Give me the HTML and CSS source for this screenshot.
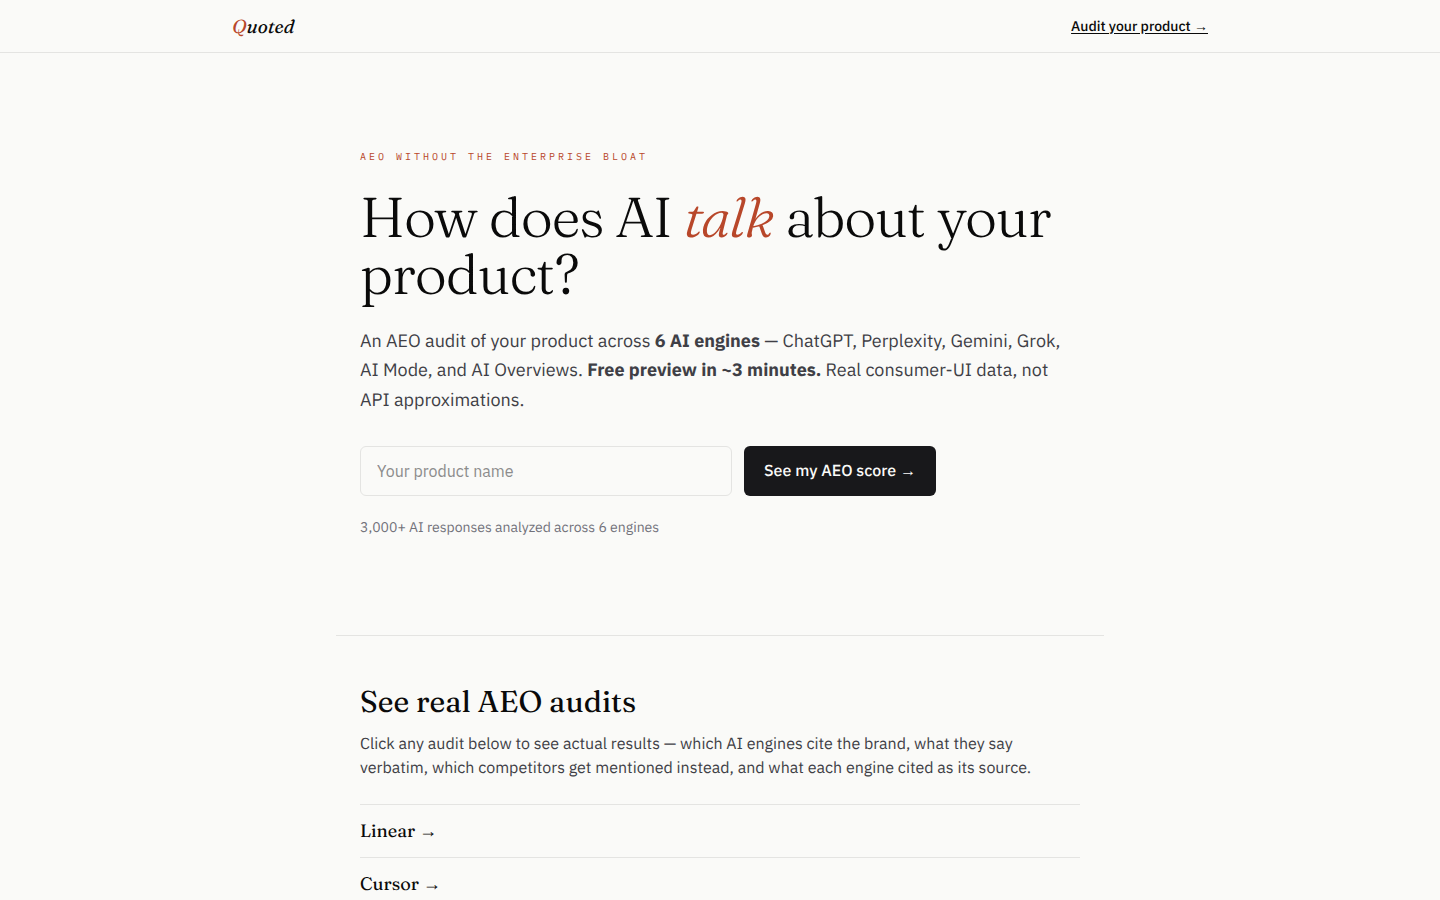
FILE: index.html
```html
<!DOCTYPE html>
<html lang="en">
<head>
<meta charset="utf-8">
<meta name="viewport" content="width=device-width, initial-scale=1">
<title>Quoted</title>
<link rel="stylesheet" href="styles.css">
</head>
<body>
<header class="site-header">
  <div class="site-nav">
    <a class="brand" href="/"><span class="accent">Q</span>uoted</a>
    <a class="nav-link" href="#audit">Audit your product <span class="arrow">→</span></a>
  </div>
</header>
<main class="content">
  <section class="hero" id="audit">
    <p class="eyebrow">AEO without the enterprise bloat</p>
    <h1 class="hero-title">How does AI <em class="accent">talk</em> about your product?</h1>
    <p class="lead">An AEO audit of your product across <strong>6 AI engines</strong> — ChatGPT, Perplexity, Gemini, Grok, AI Mode, and AI Overviews. <strong>Free preview in ~3 minutes.</strong> Real consumer-UI data, not API approximations.</p>
    <form class="audit-form">
      <input class="audit-input" type="text" name="product" placeholder="Your product name" aria-label="Your product name">
      <button class="audit-button" type="submit">See my AEO score <span class="arrow">→</span></button>
    </form>
    <p class="note">3,000+ AI responses analyzed across 6 engines</p>
  </section>
  <section class="audits">
    <h2 class="audits-title">See real AEO audits</h2>
    <p class="audits-text">Click any audit below to see actual results — which AI engines cite the brand, what they say verbatim, which competitors get mentioned instead, and what each engine cited as its source.</p>
    <ul class="audit-list">
      <li class="audit-item"><a class="audit-link" href="#linear">Linear →</a></li>
      <li class="audit-item"><a class="audit-link" href="#cursor">Cursor →</a></li>
    </ul>
  </section>
</main>
</body>
</html>
```

FILE: styles.css
```css
* {
  box-sizing: border-box;
}

:root {
  --ink: #0a0a0a;
  --text: #3f3f46;
  --muted: #71717a;
  --line: #e4e4e2;
  --paper: #fafaf8;
  --accent: #b8472a;
  --sans: "IBM Plex Sans", Roboto, sans-serif;
  --serif: Fraunces, "Liberation Serif", serif;
  --mono: "IBM Plex Mono", "Liberation Mono", monospace;
}

body {
  margin: 0;
  background: var(--paper);
  color: var(--ink);
  font-family: var(--sans);
  text-rendering: geometricPrecision;
}

h1, h2, p, ul {
  margin: 0;
}

a {
  color: inherit;
}

.accent {
  color: var(--accent);
}

.arrow {
  font-family: "Liberation Sans", sans-serif;
  font-weight: 400;
  line-height: 1;
}

.site-header {
  border-bottom: 1px solid var(--line);
}

.site-nav {
  display: flex;
  align-items: center;
  justify-content: space-between;
  max-width: 1024px;
  height: 52px;
  margin: 0 auto;
  padding: 0 24px;
}

.brand {
  font: italic 400 19px/26px var(--serif);
  text-decoration: none;
}

.nav-link {
  font-size: 14px;
  font-weight: 500;
  line-height: 20px;
  text-underline-offset: 2px;
}

.content {
  max-width: 768px;
  margin: 0 auto;
}

.hero {
  padding: 96px 24px;
}

.eyebrow {
  margin-bottom: 24px;
  color: var(--accent);
  font: 10px/16px var(--mono);
  letter-spacing: 3px;
  text-transform: uppercase;
}

.hero-title {
  margin-bottom: 23px;
  font: 300 56px/57px var(--serif);
  letter-spacing: -0.02em;
}

.lead {
  margin-bottom: 32px;
  color: var(--text);
  font-size: 18px;
  line-height: 1.625;
}

.lead strong {
  font-weight: 700;
}

.audit-form {
  display: flex;
  gap: 12px;
  max-width: 576px;
  margin-bottom: 20px;
}

.audit-input {
  flex: 1;
  min-width: 0;
  height: 50px;
  padding: 0 16px;
  border: 1px solid var(--line);
  border-radius: 6px;
  background: var(--paper);
  color: var(--ink);
  font: 16px/24px var(--sans);
}

.audit-input::placeholder {
  color: #8c8c8c;
}

.audit-button {
  padding: 0 20px;
  border: 0;
  border-radius: 6px;
  background: #18181b;
  color: var(--paper);
  font: 500 16px/24px var(--sans);
  text-rendering: geometricPrecision;
}

.note {
  color: var(--muted);
  font-size: 14px;
  line-height: 1.625;
}

.audits {
  padding: 48px 24px;
  border-top: 1px solid var(--line);
}

.audits-title {
  margin-bottom: 12px;
  font: 400 30px/36px var(--serif);
}

.audits-text {
  margin-bottom: 24px;
  color: var(--text);
  font-size: 16px;
  line-height: 24px;
}

.audit-list {
  padding: 0;
  list-style: none;
}

.audit-item {
  border-top: 1px solid var(--line);
}

.audit-link {
  display: block;
  padding: 12px 0;
  font: 400 18px/28px var(--serif);
  text-decoration: none;
}
```
